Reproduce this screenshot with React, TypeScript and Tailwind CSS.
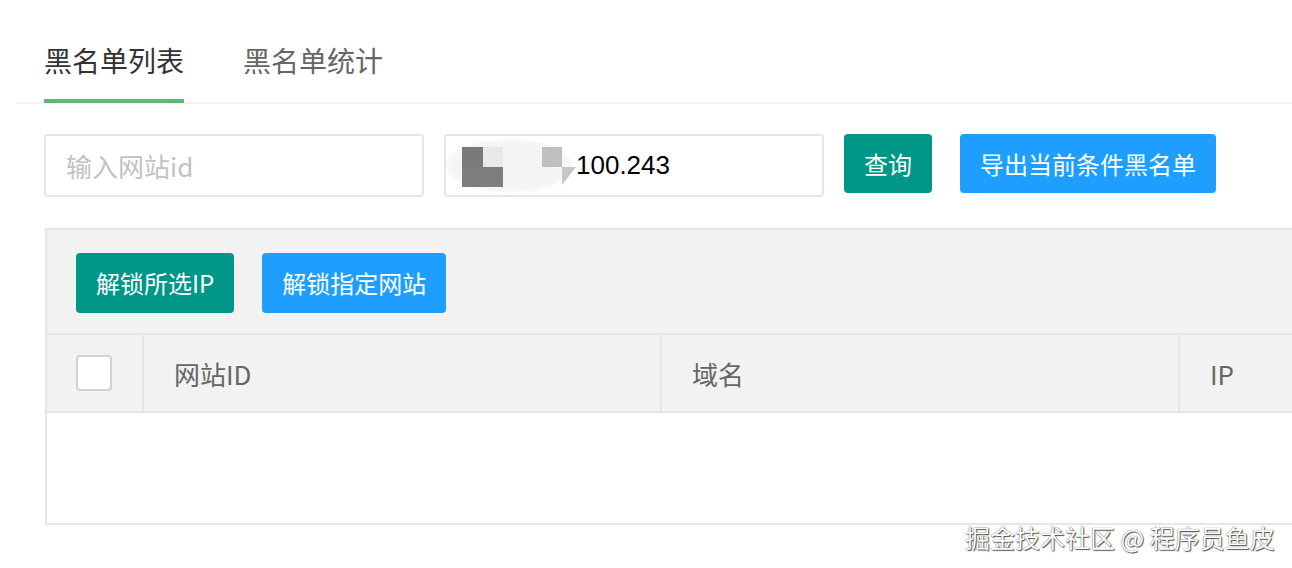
// Blacklist admin page: tabs, search filters and IP table
import React, { useState } from 'react';

const cjk = "font-['Noto_Sans_CJK_SC','Noto_Sans',sans-serif]";

function Tabs() {
  const [active, setActive] = useState(0);
  const tabs = ['黑名单列表', '黑名单统计'];
  return (
    <div className="ml-[16px] mt-[18px] flex border-b-2 border-[#f2f2f2]">
      {tabs.map((t, i) => (
        <button
          key={t}
          onClick={() => setActive(i)}
          className={`relative flex h-[84px] items-center text-[28px] leading-none ${i === 0 ? 'ml-[28px]' : 'ml-[59px]'} ${
            active === i ? 'text-[#333]' : 'text-[#666]'
          }`}
        >
          {t}
          {active === i && <span className="absolute -bottom-[1px] left-0 h-[4px] w-full bg-[#5FB878]" />}
        </button>
      ))}
    </div>
  );
}

function MaskedIp() {
  return (
    <div className="flex h-full items-center">
      <svg width="130" height="59" viewBox="0 0 130 59" className="shrink-0">
        <defs>
          <radialGradient id="blob" cx="50%" cy="50%" r="55%">
            <stop offset="0%" stopColor="#f3f3f3" />
            <stop offset="80%" stopColor="#f5f5f5" />
            <stop offset="100%" stopColor="#ffffff" />
          </radialGradient>
        </defs>
        <ellipse cx="63" cy="30" rx="64" ry="27" fill="url(#blob)" />
        <rect x="16" y="11" width="21" height="20" fill="#7a7a7a" />
        <rect x="37" y="11" width="20" height="20" fill="#e9e9e9" />
        <rect x="16" y="31" width="41" height="20" fill="#7e7e7e" />
        <rect x="96" y="11" width="20" height="20" fill="#bfbfbf" />
        <polygon points="116,31 130,31 116,49" fill="#c6c6c6" />
      </svg>
      <span className="font-['Liberation_Sans',Arial,sans-serif] text-[26px] text-black">100.243</span>
    </div>
  );
}

function Filters() {
  return (
    <div className="mt-[30px] flex items-start">
      <input
        placeholder="输入网站id"
        className={`h-[63px] w-[380px] rounded-[4px] border-2 border-[#e6e6e6] px-[20px] text-[26px] outline-none placeholder:text-[#c2c2c2] ${cjk}`}
      />
      <div className="ml-[20px] h-[63px] w-[380px] rounded-[4px] border-2 border-[#e6e6e6]">
        <MaskedIp />
      </div>
      <button className="ml-[20px] h-[59px] rounded-[4px] bg-[#009688] px-[20px] text-[24px] text-white">查询</button>
      <button className="ml-[28px] h-[59px] rounded-[4px] bg-[#1E9FFF] px-[20px] text-[24px] text-white">
        导出当前条件黑名单
      </button>
    </div>
  );
}

function Table() {
  const [checked, setChecked] = useState(false);
  return (
    <div className="mt-[31px] w-[1300px] border-2 border-r-0 border-[#e6e6e6]">
      <div className="flex h-[105px] items-start gap-[28px] border-b-2 border-[#e6e6e6] bg-[#f2f2f2] pl-[29px] pt-[23px]">
        <button className="h-[60px] rounded-[4px] bg-[#009688] px-[20px] text-[24px] text-white">解锁所选IP</button>
        <button className="h-[60px] rounded-[4px] bg-[#1E9FFF] px-[20px] text-[24px] text-white">解锁指定网站</button>
      </div>
      <div className="flex h-[78px] border-b-2 border-[#e6e6e6] bg-[#f2f2f2] text-[26px] text-[#666]">
        <div className="flex w-[97px] items-center border-r-2 border-[#e6e6e6] pl-[29px]">
          <button
            onClick={() => setChecked(!checked)}
            className={`h-[36px] w-[36px] rounded-[4px] border-2 ${checked ? 'border-[#5FB878] bg-[#5FB878]' : 'border-[#d2d2d2] bg-white'}`}
          />
        </div>
        <div className="flex w-[518px] items-center border-r-2 border-[#e6e6e6] pl-[30px]">网站ID</div>
        <div className="flex w-[518px] items-center border-r-2 border-[#e6e6e6] pl-[30px]">域名</div>
        <div className="flex flex-1 items-center pl-[30px]">IP</div>
      </div>
      <div className="h-[110px] bg-white" />
    </div>
  );
}

export default function App() {
  return (
    <div className={`relative h-[568px] w-[1292px] overflow-hidden bg-white ${cjk}`}>
      <Tabs />
      <div className="pl-[44px]">
        <Filters />
        <div className="pl-[1px]">
          <Table />
        </div>
      </div>
      <div className="absolute left-[965px] top-[519px] text-[25px] text-white [text-shadow:0_0_1px_#333,1px_1px_1px_#555]">
        掘金技术社区 @ 程序员鱼皮
      </div>
    </div>
  );
}
